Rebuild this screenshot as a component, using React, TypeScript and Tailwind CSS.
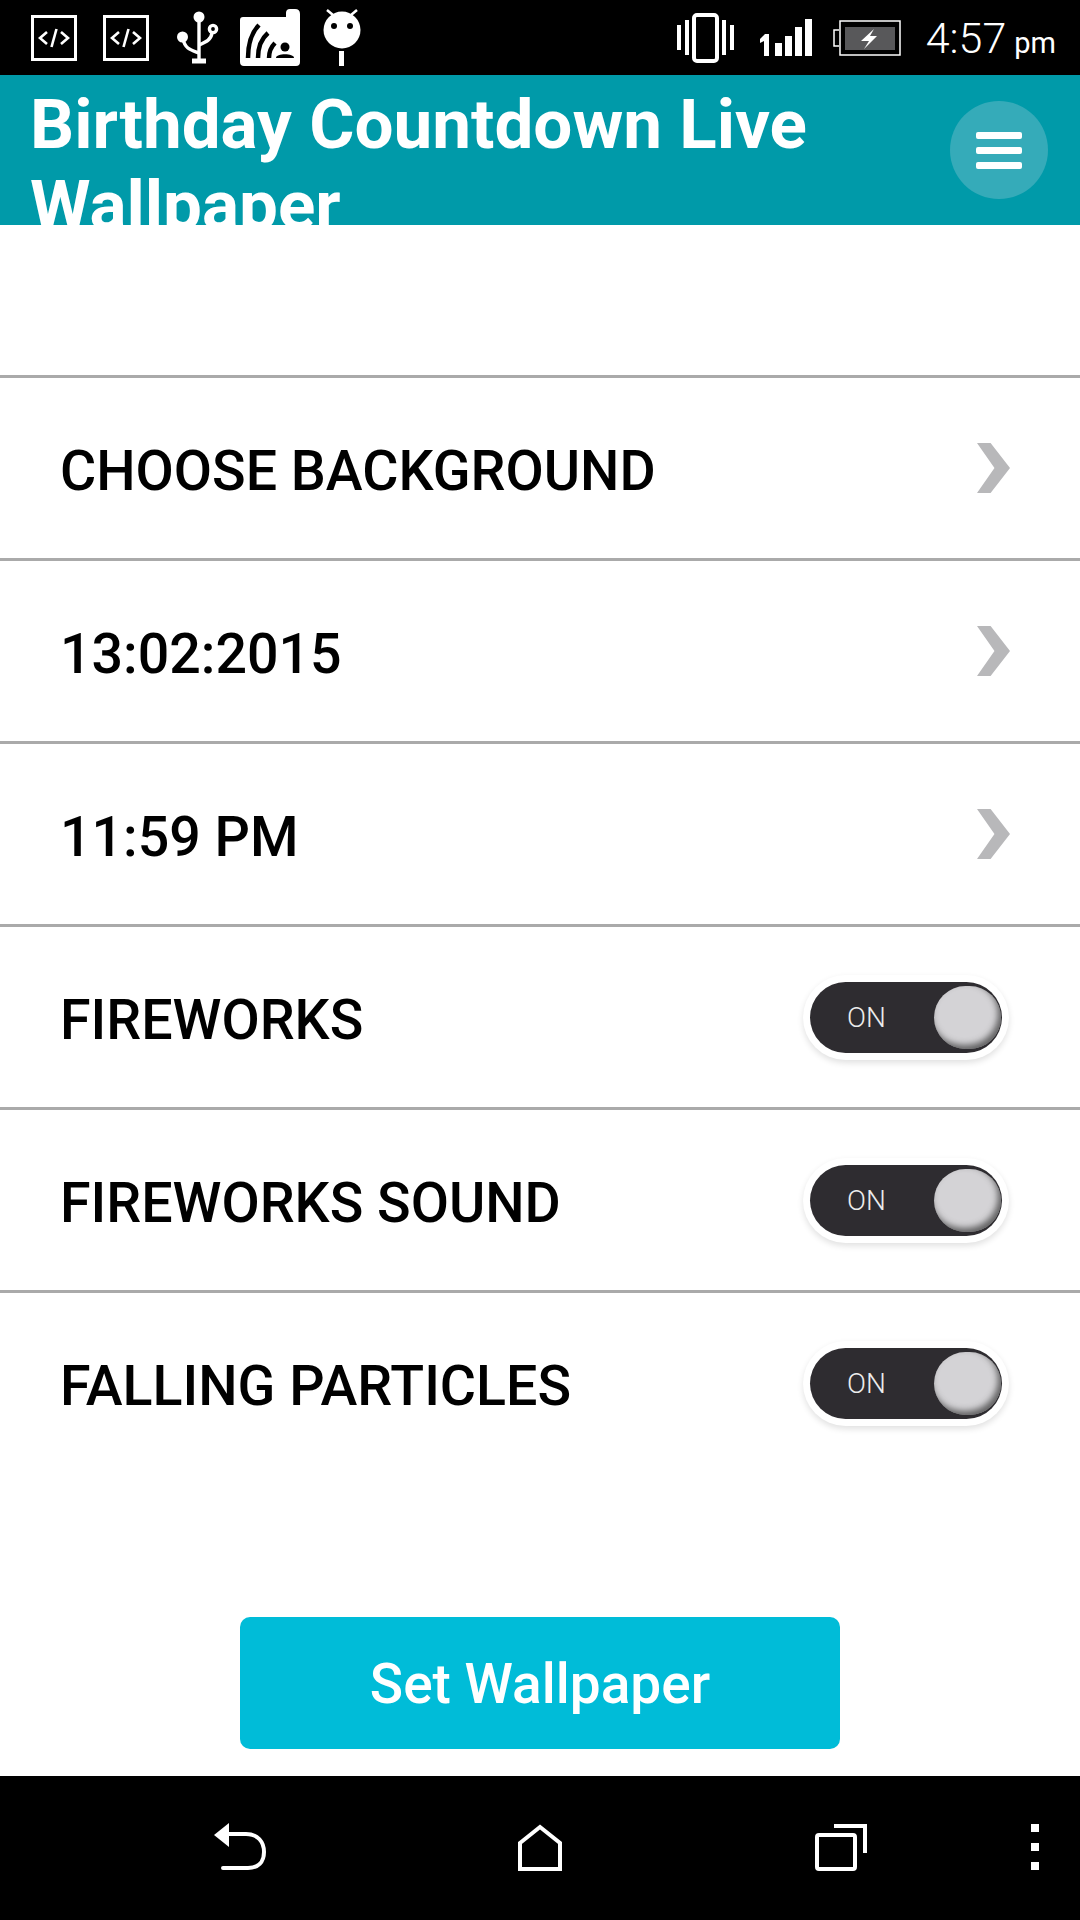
const rows = [
  { label: "CHOOSE BACKGROUND", kind: "link" },
  { label: "13:02:2015", kind: "link" },
  { label: "11:59 PM", kind: "link" },
  { label: "FIREWORKS", kind: "toggle" },
  { label: "FIREWORKS SOUND", kind: "toggle" },
  { label: "FALLING PARTICLES", kind: "toggle" },
];

function CodeIcon() {
  return (
    <div className="flex h-[46px] w-[46px] items-center justify-center border-[3px] border-white text-white">
      <svg width="32" height="20" viewBox="0 0 32 20" fill="none" stroke="currentColor" strokeWidth="2.6">
        <path d="M9 4 L2 10 L9 16" />
        <path d="M18.5 1 L13.5 19" />
        <path d="M23 4 L30 10 L23 16" />
      </svg>
    </div>
  );
}

function UsbIcon() {
  return (
    <svg width="42" height="53" viewBox="0 0 42 53" fill="none" stroke="white" strokeWidth="3.4">
      <circle cx="22" cy="6" r="5.5" fill="white" stroke="none" />
      <path d="M22 8 V48" />
      <path d="M15 50 H29" strokeWidth="5" />
      <circle cx="5.5" cy="26" r="5.5" fill="white" stroke="none" />
      <path d="M6 28 C8 38 14 39 22 42" />
      <circle cx="36" cy="18" r="3.6" />
      <path d="M35 22 C34 29 29 31 22 34" />
    </svg>
  );
}

function WifiCardIcon() {
  return (
    <svg width="60" height="57" viewBox="0 0 60 57">
      <path d="M3 8 H46 V4 Q46 0 50 0 H55 Q60 0 60 5 V53 Q60 57 56 57 H4 Q0 57 0 53 V11 Q0 8 3 8 Z" fill="white" />
      <g fill="none" stroke="black" strokeWidth="4.5">
        <path d="M8 49 C8 36 11 24 19 16" />
        <path d="M18 49 C18 38 21 30 28 24" />
        <path d="M29 49 C29 43 31 38 35 34" />
      </g>
      <circle cx="45" cy="38" r="4.5" fill="black" />
      <path d="M36 49 C36 44 54 44 54 49 Z" fill="black" />
    </svg>
  );
}

function AndroidIcon() {
  return (
    <svg width="38" height="57" viewBox="0 0 38 57">
      <path d="M4 1 L10 6 M34 1 L28 6" stroke="white" strokeWidth="2.5" />
      <circle cx="19" cy="21" r="18.5" fill="white" />
      <circle cx="11" cy="17" r="3" fill="black" />
      <circle cx="27" cy="17" r="3" fill="black" />
      <rect x="16" y="42" width="5" height="15" fill="white" />
    </svg>
  );
}

function VibrateIcon() {
  return (
    <svg width="57" height="50" viewBox="0 0 57 50" fill="white">
      <rect x="0" y="12" width="4" height="25" />
      <rect x="8" y="7" width="4" height="35" />
      <rect x="45" y="7" width="4" height="35" />
      <rect x="53" y="12" width="4" height="25" />
      <rect x="17" y="2" width="23" height="46" rx="3" fill="none" stroke="white" strokeWidth="4" />
    </svg>
  );
}

function SignalIcon() {
  return (
    <svg width="52" height="38" viewBox="0 0 52 38" fill="white">
      <path d="M0 20 L5 15 H9 V37 H4 V22 L0 24 Z" />
      <rect x="15" y="24" width="7" height="13" />
      <rect x="25" y="17" width="7" height="20" />
      <rect x="35" y="8" width="7" height="29" />
      <rect x="45" y="0" width="7" height="37" />
    </svg>
  );
}

function BatteryIcon() {
  return (
    <svg width="68" height="36" viewBox="0 0 68 36">
      <path d="M6 10 H1 V26 H6" fill="none" stroke="white" strokeWidth="1.5" />
      <rect x="7" y="1" width="60" height="34" fill="none" stroke="white" strokeWidth="1.5" />
      <rect x="12" y="7" width="50" height="23" fill="#58585a" />
      <path d="M41 9 L28 21 H36 L31 29 L44 16 H37 Z" fill="white" />
    </svg>
  );
}

function Toggle() {
  return (
    <div className="rounded-full bg-white p-[7px] shadow-[0_3px_6px_rgba(0,0,0,0.12)]">
      <div className="flex h-[71px] w-[192px] items-center justify-between rounded-full bg-[#2e2c30] pl-[37px] pr-[1px]">
        <span className="pt-[2px] text-[28px] font-light text-[#ececec]">ON</span>
        <div className="h-[63px] w-[67px] rounded-full bg-[#d4d3d6] shadow-[inset_-3px_-4px_6px_rgba(50,50,50,0.7)]" />
      </div>
    </div>
  );
}

export default function App() {
  return (
    <div className="flex h-[1920px] w-[1080px] flex-col overflow-hidden bg-white font-['Roboto',sans-serif]">
      {/* status bar */}
      <div className="flex h-[75px] shrink-0 items-center justify-between bg-black pl-[31px] pr-[24px]">
        <div className="flex items-center">
          <CodeIcon />
          <div className="ml-[26px]"><CodeIcon /></div>
          <div className="ml-[28px]"><UsbIcon /></div>
          <div className="ml-[21px]"><WifiCardIcon /></div>
          <div className="ml-[23px]"><AndroidIcon /></div>
        </div>
        <div className="flex items-center">
          <VibrateIcon />
          <div className="ml-[26px]"><SignalIcon /></div>
          <div className="ml-[21px]"><BatteryIcon /></div>
          <div className="ml-[25px] pt-[2px] text-[43px] leading-none font-light text-white">
            4:57<span className="ml-[8px] text-[29px] font-normal">pm</span>
          </div>
        </div>
      </div>

      {/* header */}
      <div className="flex h-[150px] shrink-0 justify-between overflow-hidden bg-[#009aa9] pl-[30px] pr-[32px]">
        <h1 className="w-[850px] pt-[9px] text-[69.2px] leading-[81px] font-bold text-white">
          Birthday Countdown Live Wallpaper
        </h1>
        <div className="mt-[26px] flex h-[98px] w-[98px] shrink-0 flex-col items-center justify-center gap-[8px] rounded-full bg-[#35abb9]">
          <div className="h-[7px] w-[46px] rounded-[2px] bg-white" />
          <div className="h-[7px] w-[46px] rounded-[2px] bg-white" />
          <div className="h-[7px] w-[46px] rounded-[2px] bg-white" />
        </div>
      </div>

      {/* settings */}
      <div className="flex-1 pt-[150px]">
        {rows.map((row) => (
          <div
            key={row.label}
            className="flex h-[183px] items-center justify-between border-t-[3px] border-[#aaaaaa] pl-[60px] pr-[71px]"
          >
            <span className="pt-[8px] text-[55.5px] font-medium text-black">{row.label}</span>
            {row.kind === "link" ? (
              <svg className="-mr-[1px]" width="33" height="50" viewBox="0 0 34 50" preserveAspectRatio="none" fill="#b8b8ba">
                <path d="M0 0 H14 L34 25 L14 50 H0 L18 25 Z" />
              </svg>
            ) : (
              <Toggle />
            )}
          </div>
        ))}
        <div className="mt-[144px] flex justify-center">
          <div className="flex h-[132px] w-[600px] items-center justify-center rounded-[10px] bg-[#00bcd8] pt-[3px] text-[55px] font-medium text-white">
            Set Wallpaper
          </div>
        </div>
      </div>

      {/* nav bar */}
      <div className="flex h-[144px] shrink-0 items-center bg-black pb-[2px]">
        <div className="flex w-full items-center pl-[214px] pr-[41px]">
          <svg width="54" height="48" viewBox="0 0 54 48" fill="none" stroke="white" strokeWidth="4" strokeLinecap="round">
            <path d="M0 12 L15 0 V24 Z" fill="white" stroke="none" />
            <path d="M12 11 H32 C44 11 50 19 50 29 C50 39 44 45 34 45 H9" />
          </svg>
          <svg className="ml-[250px]" width="44" height="47" viewBox="0 0 44 47" fill="none" stroke="white" strokeWidth="4">
            <path d="M2 19 L22 3 L42 19 V45 H2 Z" />
          </svg>
          <svg className="ml-[253px]" width="52" height="47" viewBox="0 0 52 47" fill="none" stroke="white" strokeWidth="4">
            <rect x="2" y="11" width="38" height="34" rx="2" />
            <path d="M19 2 H50 V29" />
          </svg>
          <div className="ml-auto flex flex-col gap-[11px]">
            <div className="h-[8px] w-[8px] bg-white" />
            <div className="h-[8px] w-[8px] bg-white" />
            <div className="h-[8px] w-[8px] bg-white" />
          </div>
        </div>
      </div>
    </div>
  );
}
